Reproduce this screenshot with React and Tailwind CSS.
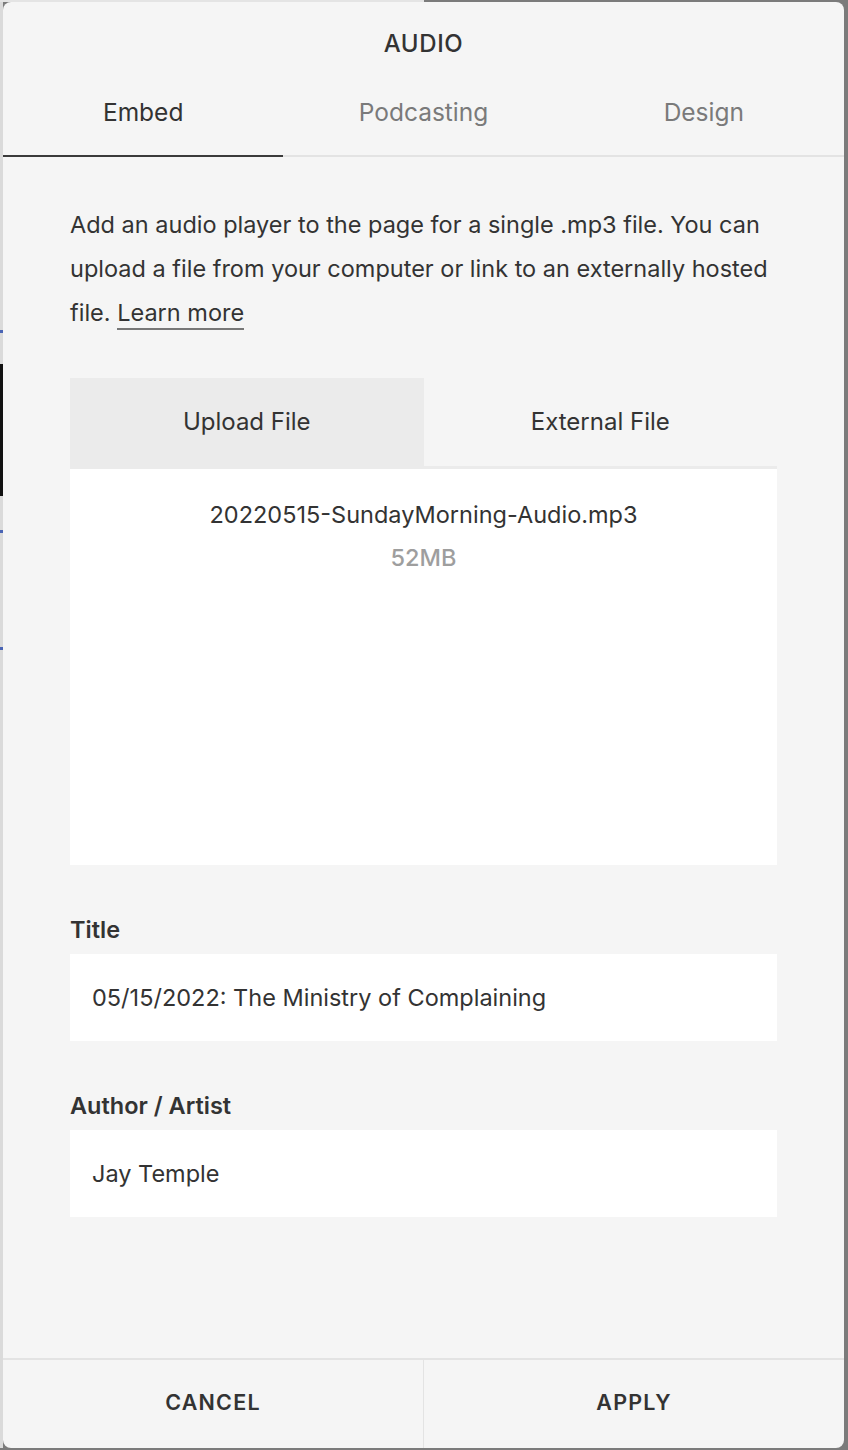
export default function App() {
  const font = { fontFamily: 'Inter, "Liberation Sans", sans-serif' };
  return (
    <div className="w-[848px] h-[1450px] bg-[#7b7b7b] flex flex-col overflow-hidden" style={font}>
      <div className="h-[2px] flex shrink-0">
        <div className="w-[424px] bg-[#e4e4e4]" />
        <div className="flex-1 bg-[#7b7b7b]" />
      </div>
      <div className="flex flex-1 min-h-0">
        <div className="w-[3px] shrink-0 bg-[#dadada] flex flex-col h-[1446px]">
          <div className="h-[328px]" />
          <div className="h-[3px] bg-[#4a64b4]" />
          <div className="h-[31px]" />
          <div className="h-[132px] bg-[#111111]" />
          <div className="h-[34px]" />
          <div className="h-[3px] bg-[#4a64b4]" />
          <div className="h-[114px]" />
          <div className="h-[3px] bg-[#4a64b4]" />
        </div>
        <div className="w-[841px] h-[1446px] bg-[#f5f5f5] rounded-lg flex flex-col text-[#333333]">
          <div className="h-[84px] shrink-0 flex items-center justify-center text-[24px] font-medium tracking-[0.6px] text-[#333]">
            AUDIO
          </div>
          <div className="flex shrink-0 border-b-2 border-[#e3e3e3]">
            <div className="flex-1 h-[71px] -mb-[2px] border-b-2 border-[#3a3a3a] pt-[14px] text-center text-[24.5px] leading-[24px] text-[#333]">Embed</div>
            <div className="flex-1 h-[69px] pt-[14px] text-center text-[24.5px] leading-[24px] text-[#7a7a7a]">Podcasting</div>
            <div className="flex-1 h-[69px] pt-[14px] text-center text-[24.5px] leading-[24px] text-[#7a7a7a]">Design</div>
          </div>
          <div className="flex-1 flex flex-col px-[67px] pt-[46px] w-[841px]">
            <p className="text-[23.5px] leading-[44px] text-[#333] whitespace-nowrap">
              Add an audio player to the page for a single .mp3 file. You can
              <br />
              upload a file from your computer or link to an externally hosted
              <br />
              file.{' '}
              <span className="inline-block leading-[24px] pb-[3px] border-b-2 border-[#777]">Learn more</span>
            </p>
            <div className="mt-[43px] flex h-[91px] border-b-[3px] border-[#ebebeb]">
              <div className="flex-1 bg-[#ebebeb] flex items-center justify-center text-[24px] text-[#333]">Upload File</div>
              <div className="flex-1 flex items-center justify-center text-[24px] text-[#333]">External File</div>
            </div>
            <div className="h-[396px] bg-white flex flex-col items-center pt-[32px]">
              <div className="text-[23.5px] leading-[28px] text-[#333]">20220515-SundayMorning-Audio.mp3</div>
              <div className="mt-[15px] text-[23.5px] leading-[28px] font-medium text-[#9e9e9e]">52MB</div>
            </div>
            <div className="mt-[51px] text-[23.5px] leading-[28px] font-semibold text-[#333]">Title</div>
            <div className="mt-[10px] h-[87px] bg-white flex items-center px-[22px] text-[23.5px] text-[#333]">
              05/15/2022: The Ministry of Complaining
            </div>
            <div className="mt-[51px] text-[23.5px] leading-[28px] font-semibold text-[#333]">Author / Artist</div>
            <div className="mt-[10px] h-[87px] bg-white flex items-center px-[22px] text-[23.5px] text-[#333]">
              Jay Temple
            </div>
          </div>
          <div className="h-[90px] shrink-0 border-t-2 border-[#e3e3e3] flex">
            <div className="flex-1 flex items-center justify-center pb-[4px] text-[21.5px] font-semibold tracking-[1.2px] text-[#333]">CANCEL</div>
            <div className="w-px bg-[#e3e3e3]" />
            <div className="flex-1 flex items-center justify-center pb-[4px] text-[21.5px] font-semibold tracking-[1.2px] text-[#333]">APPLY</div>
          </div>
        </div>
      </div>
    </div>
  );
}
